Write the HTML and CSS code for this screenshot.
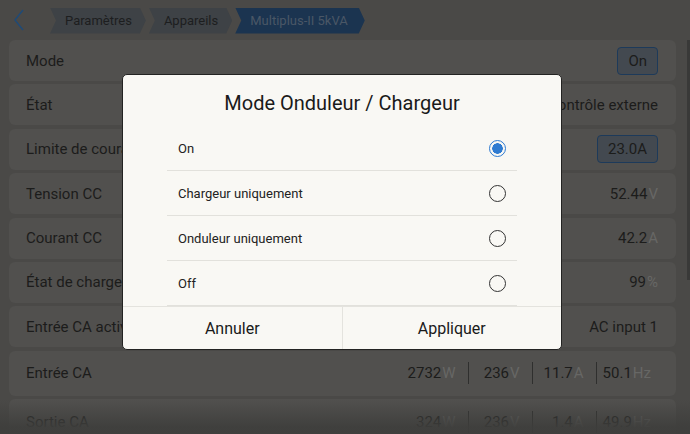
FILE: index.html
```html
<!DOCTYPE html>
<html lang="fr">
<head>
  <meta charset="UTF-8">
  <title>Multiplus-II 5kVA</title>
  <meta name="viewport" content="width=device-width, initial-scale=1">
  <link rel="stylesheet" href="styles.css">
</head>
<body>
  <header class="topbar">
    <svg class="back" width="14" height="24" viewBox="0 0 14 24">
      <path d="M11 2 L3 12 L11 22" fill="none" stroke="#1e4a78" stroke-width="1.4"/>
    </svg>
    <nav class="crumbs">
      <span class="crumb">Paramètres</span>
      <span class="crumb">Appareils</span>
      <span class="crumb active">Multiplus-II 5kVA</span>
    </nav>
  </header>

  <main class="list">
    <div class="row"><span class="label">Mode</span><span class="btn">On</span></div>
    <div class="row"><span class="label">État</span><span class="value">Contrôle externe</span></div>
    <div class="row"><span class="label">Limite de courant d'entrée</span><span class="btn">23.0A</span></div>
    <div class="row"><span class="label">Tension CC</span><span class="value">52.44<i>V</i></span></div>
    <div class="row"><span class="label">Courant CC</span><span class="value">42.2<i>A</i></span></div>
    <div class="row"><span class="label">État de charge</span><span class="value">99<i>%</i></span></div>
    <div class="row"><span class="label">Entrée CA active</span><span class="value">AC input 1</span></div>
    <div class="row tall">
      <span class="label">Entrée CA</span>
      <span class="multi">
        <span class="cell">2732<i>W</i></span>
        <span class="cell">236<i>V</i></span>
        <span class="cell">11.7<i>A</i></span>
        <span class="cell last">50.1<i>Hz</i></span>
      </span>
    </div>
    <div class="row tall">
      <span class="label">Sortie CA</span>
      <span class="multi">
        <span class="cell">324<i>W</i></span>
        <span class="cell">236<i>V</i></span>
        <span class="cell">1.4<i>A</i></span>
        <span class="cell last">49.9<i>Hz</i></span>
      </span>
    </div>
  </main>

  <div class="scrollbar"></div>
  <div class="fade"></div>

  <div class="dialog">
    <h2>Mode Onduleur / Chargeur</h2>
    <ul class="options">
      <li><span>On</span><span class="radio checked"></span></li>
      <li><span>Chargeur uniquement</span><span class="radio"></span></li>
      <li><span>Onduleur uniquement</span><span class="radio"></span></li>
      <li><span>Off</span><span class="radio"></span></li>
    </ul>
    <div class="actions">
      <button>Annuler</button>
      <button>Appliquer</button>
    </div>
  </div>
</body>
</html>
```

FILE: styles.css
```css
html, body {
  margin: 0;
  padding: 0;
  height: 100%;
  overflow: hidden;
}
body {
  font-family: Roboto, 'Noto Sans', sans-serif;
  background: #4a4947;
  color: #1c1c1b;
  position: relative;
}
.topbar {
  height: 40px;
  display: flex;
  align-items: center;
  padding-left: 12px;
}
.back {
  margin-right: 24px;
}
.crumbs {
  display: flex;
  gap: 3px;
  height: 26px;
  margin-top: 1px;
}
.crumb {
  display: flex;
  align-items: center;
  padding: 0 14px 0 15px;
  font-size: 13px;
  background: #3e4246;
  color: #1d1e1f;
  clip-path: polygon(0 0, calc(100% - 6px) 0, 100% 50%, calc(100% - 6px) 100%, 0 100%, 6px 50%);
}
.crumb.active {
  background: #1b3450;
  color: #4a5766;
  padding: 0 17px 0 15px;
}
.list {
  display: flex;
  flex-direction: column;
  gap: 3.4px;
  margin: 0 14px 0 9px;
}
.row {
  height: 41px;
  border-radius: 6px;
  background: #51504e;
  display: flex;
  align-items: center;
  justify-content: space-between;
  padding: 0 18px 0 17px;
  font-size: 15px;
  white-space: nowrap;
}
.row.tall {
  height: 45px;
}
.row i {
  font-style: normal;
  color: #676765;
  margin-left: 1px;
}
.btn {
  border: 1px solid #1d3a5a;
  background: #434950;
  border-radius: 4px;
  padding: 4px 10px;
  line-height: 18px;
}
.multi {
  display: flex;
  align-items: center;
  margin-right: 7px;
}
.cell {
  width: 64px;
  box-sizing: border-box;
  text-align: right;
  padding-right: 12px;
  border-right: 1px solid #2f2f2e;
  line-height: 22px;
}
.cell.last {
  width: auto;
  border-right: none;
  padding: 0 0 0 6px;
}
.scrollbar {
  position: absolute;
  right: 0;
  top: 40px;
  width: 3px;
  height: 240px;
  background: #393938;
}
.fade {
  position: absolute;
  left: 0;
  right: 0;
  bottom: 0;
  height: 34px;
  background: linear-gradient(to bottom, rgba(74,73,71,0), rgba(62,62,60,0.92) 80%);
}
.dialog {
  position: absolute;
  left: 122px;
  top: 74px;
  width: 438px;
  height: 274px;
  background: #f9f8f4;
  border: 1px solid #232322;
  border-radius: 5px;
  display: flex;
  flex-direction: column;
  overflow: hidden;
}
.dialog h2 {
  margin: 0;
  height: 51px;
  display: flex;
  align-items: center;
  justify-content: center;
  padding-top: 4px;
  box-sizing: border-box;
  font-size: 20px;
  font-weight: 400;
  color: #1a1a1a;
}
.options {
  list-style: none;
  margin: 0 44px;
  padding: 0;
}
.options li {
  height: 45px;
  box-sizing: border-box;
  display: flex;
  align-items: center;
  justify-content: space-between;
  padding: 0 11px;
  font-size: 13px;
  color: #222;
  border-bottom: 1px solid #e2e1dc;
}
.radio {
  width: 15px;
  height: 15px;
  border: 1.5px solid #333;
  border-radius: 50%;
}
.radio.checked {
  border-color: #2f7bd1;
  background: radial-gradient(circle, #2f7bd1 0 5px, #f9f8f4 5.5px);
}
.actions {
  display: flex;
  flex: 1;
  border-top: 1px solid #e4e3de;
}
.actions button {
  flex: 1;
  background: none;
  border: none;
  font-family: inherit;
  font-size: 16px;
  color: #1a1a1a;
  padding: 0;
}
.actions button + button {
  border-left: 1px solid #e4e3de;
}
```
